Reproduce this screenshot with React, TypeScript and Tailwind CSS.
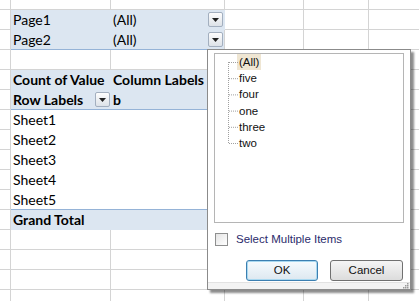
import React from "react";

const grid = "border-[#d4d4d4]";
const pivotBg = "bg-[#dce6f1]";

// small dropdown button used by the pivot filters
function DropButton({ className = "" }: { className?: string }) {
  return (
    <div
      className={`flex h-[15px] w-[15px] items-center justify-center rounded-[2px] border border-[#a3afbf] bg-gradient-to-b from-[#fdfdfd] to-[#dde2e8] ${className}`}
    >
      <svg width="7" height="4" viewBox="0 0 7 4">
        <path d="M0 0h7L3.5 4z" fill="#222" />
      </svg>
    </div>
  );
}

// column A + the normal grid cells D, E, F
function ColA({ h = "h-5" }: { h?: string }) {
  return <div className={`${h} w-[11px] shrink-0 border-r border-b ${grid}`} />;
}

function RightCols({ h = "h-5" }: { h?: string }) {
  return (
    <>
      <div className={`${h} w-[79px] shrink-0 border-r border-b ${grid}`} />
      <div className={`${h} w-[65px] shrink-0 border-r border-b ${grid}`} />
      <div className={`${h} flex-1 border-b ${grid}`} />
    </>
  );
}

function BlankRow({ h = "h-5" }: { h?: string }) {
  return (
    <div className="flex">
      <ColA h={h} />
      <div className={`${h} w-[100px] shrink-0 border-r border-b ${grid}`} />
      <div className={`${h} w-[114px] shrink-0 border-r border-b ${grid}`} />
      <RightCols h={h} />
    </div>
  );
}

function PivotRow({
  children,
  className = "",
}: {
  children?: React.ReactNode;
  className?: string;
}) {
  return (
    <div className="flex">
      <ColA />
      <div className={`flex h-5 w-[214px] shrink-0 items-center border-r border-b ${className}`}>
        {children}
      </div>
      <RightCols />
    </div>
  );
}

const items = ["(All)", "five", "four", "one", "three", "two"];

function FilterPopup() {
  return (
    <div className="absolute left-[207px] top-[49px] flex h-[241px] w-[204px] flex-col border border-[#8b8b8b] bg-white shadow-[3px_3px_2px_rgba(0,0,0,0.45)] font-['Liberation_Sans',sans-serif] text-[11.5px]">
      <div className="relative mx-[6px] mt-[3px] h-[170px] border border-[#b5b5b5] bg-white">
        {/* tree lines */}
        <svg className="absolute left-0 top-0" width="30" height="100">
          <line x1="13.5" y1="8" x2="13.5" y2="89" stroke="#a0a0a0" strokeDasharray="1 1" />
          {items.map((_, i) => (
            <line
              key={i}
              x1="14"
              y1={8.5 + i * 16.2}
              x2="23"
              y2={8.5 + i * 16.2}
              stroke="#a0a0a0"
              strokeDasharray="1 1"
            />
          ))}
        </svg>
        <div className="flex flex-col pl-[22px]">
          {items.map((it, i) => (
            <div key={it} className="flex h-[16.2px] items-center">
              <span className={`px-[2px] leading-[16px] text-[#111] ${i === 0 ? "bg-[#efe6d3]" : ""}`}>
                {it}
              </span>
            </div>
          ))}
        </div>
      </div>
      <div className="mt-[8px] flex items-center pl-[7px]">
        <div className="h-[13px] w-[13px] border border-[#8e8f8f] bg-gradient-to-br from-[#e4e4e4] to-white" />
        <span className="ml-[8px] text-[#2b2b6b]">Select Multiple Items</span>
      </div>
      <div className="mt-[12px] flex justify-end gap-[12px] pr-[7px]">
        <button className="h-[21px] w-[72px] rounded-[3px] border border-[#3c7fb1] bg-gradient-to-b from-[#f6fbfe] to-[#dde8f0] text-[#111] shadow-[inset_0_0_0_1px_#a8d8f0]">
          OK
        </button>
        <button className="h-[21px] w-[73px] rounded-[3px] border border-[#707070] bg-gradient-to-b from-[#f5f5f5] to-[#dcdcdc] text-[#111]">
          Cancel
        </button>
      </div>
      <div className="mt-auto flex h-[7px] justify-end border-t border-[#e2e2e2] bg-[#f3f3f3] pr-[1px]">
        <svg width="6" height="6" viewBox="0 0 6 6">
          <rect x="4" y="0" width="1.5" height="1.5" fill="#9a9a9a" />
          <rect x="2" y="2" width="1.5" height="1.5" fill="#9a9a9a" />
          <rect x="4" y="2" width="1.5" height="1.5" fill="#9a9a9a" />
          <rect x="0" y="4" width="1.5" height="1.5" fill="#9a9a9a" />
          <rect x="2" y="4" width="1.5" height="1.5" fill="#9a9a9a" />
          <rect x="4" y="4" width="1.5" height="1.5" fill="#9a9a9a" />
        </svg>
      </div>
    </div>
  );
}

export default function App() {
  const sheets = ["Sheet1", "Sheet2", "Sheet3", "Sheet4", "Sheet5"];
  return (
    <div className="relative h-[301px] w-[419px] overflow-hidden bg-white font-['Lato',sans-serif] text-[14px] text-black">
      <BlankRow h="h-[10px]" />

      {/* report filter area */}
      <PivotRow className={`${pivotBg} border-[#dce6f1]`}>
        <span className="w-[100px] pl-[2px]">Page1</span>
        <span className="flex-1 pl-[2px]">(All)</span>
        <DropButton className="mr-[1px]" />
      </PivotRow>
      <PivotRow className={`${pivotBg} border-b-[#95b3d7] border-r-[#d4d4d4]`}>
        <span className="w-[100px] pl-[2px]">Page2</span>
        <span className="flex-1 pl-[2px]">(All)</span>
        <DropButton className="mr-[1px]" />
      </PivotRow>

      <BlankRow />

      {/* pivot header */}
      <PivotRow className={`${pivotBg} border-[#dce6f1] font-bold`}>
        <span className="w-[100px] pl-[2px]">Count of Value</span>
        <span className="flex-1 pl-[2px]">Column Labels</span>
      </PivotRow>
      <PivotRow className={`${pivotBg} border-b-[#95b3d7] border-r-[#dce6f1] font-bold`}>
        <div className="flex w-[100px] items-center pl-[2px]">
          <span>Row Labels</span>
          <DropButton className="ml-auto mr-[1px]" />
        </div>
        <span className="flex-1 pl-[2px]">b</span>
      </PivotRow>

      {sheets.map((s, i) => (
        <PivotRow
          key={s}
          className={i === sheets.length - 1 ? "border-b-[#95b3d7] border-r-white" : "border-white"}
        >
          <span className="pl-[2px]">{s}</span>
        </PivotRow>
      ))}

      <PivotRow className={`${pivotBg} border-[#dce6f1] font-bold`}>
        <span className="pl-[2px]">Grand Total</span>
      </PivotRow>

      <BlankRow />
      <BlankRow />
      <BlankRow />
      <BlankRow />

      <FilterPopup />
    </div>
  );
}
